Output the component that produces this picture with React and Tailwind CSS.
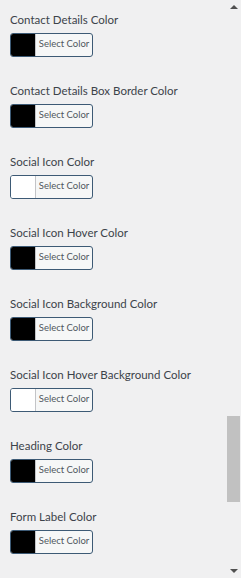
import React from 'react';

const rows = [
    { label: "Contact Details Color", color: "#000000" },
    { label: "Contact Details Box Border Color", color: "#000000" },
    { label: "Social Icon Color", color: "#ffffff" },
    { label: "Social Icon Hover Color", color: "#000000" },
    { label: "Social Icon Background Color", color: "#000000" },
    { label: "Social Icon Hover Background Color", color: "#ffffff" },
    { label: "Heading Color", color: "#000000" },
    { label: "Form Label Color", color: "#000000" },
];

const ColorPicker = ({ color }) => (
    <button type="button" className="flex h-[24px] w-[83px] overflow-hidden rounded-[3px] border border-[#3d5a75] bg-[#f6f7f7] p-0 font-['Lato',sans-serif]">
        <span className="block h-full w-[25px] shrink-0 border-r border-[#c3c4c7]" style={{ backgroundColor: color }}></span>
        <span className="flex flex-1 items-center justify-center pb-[1px] text-[9.5px] text-[#50575e]">Select Color</span>
    </button>
);

const App = () => {
    return (
        <div className="flex h-[578px] w-[241px] overflow-hidden bg-[#f0f0f1] font-['Lato',sans-serif]">
            <div className="flex-1 px-[10px] pt-[12px]">
                {rows.map((row) => (
                    <div key={row.label} className="mb-[26px]">
                        <div className="mb-[5px] h-[16px] whitespace-nowrap text-[11.5px] leading-[16px] text-[#3c434a]">{row.label}</div>
                        <ColorPicker color={row.color} />
                    </div>
                ))}
            </div>

            <div className="flex w-[15px] shrink-0 flex-col items-center">
                <div className="flex h-[14px] w-full items-center justify-center">
                    <span className="block h-0 w-0 border-x-[4px] border-b-[4px] border-x-transparent border-b-[#505050]"></span>
                </div>
                <div className="flex-1 w-full pl-[1px]">
                    <div className="mt-[402px] h-[86px] w-[13px] bg-[#c1c1c1]"></div>
                </div>
                <div className="flex h-[14px] w-full items-center justify-center">
                    <span className="block h-0 w-0 border-x-[4px] border-t-[4px] border-x-transparent border-t-[#505050]"></span>
                </div>
            </div>
        </div>
    );
};

export default App;
